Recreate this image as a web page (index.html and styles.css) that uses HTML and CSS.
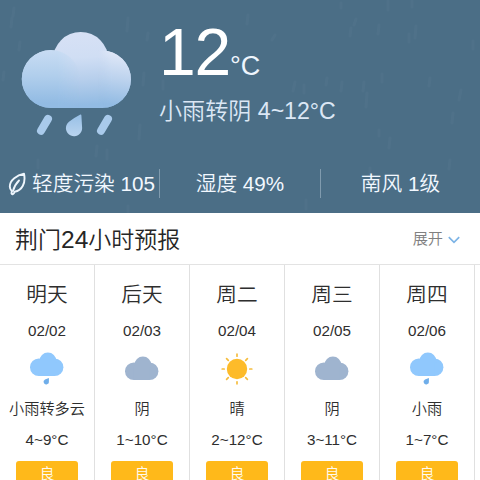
FILE: index.html
```html
<!DOCTYPE html>
<html lang="zh-CN">
<head>
<meta charset="utf-8">
<title>天气预报</title>
<link rel="stylesheet" href="styles.css">
</head>
<body>
<svg class="defs" width="0" height="0" aria-hidden="true">
  <symbol id="puffs" viewBox="0 0 36 36">
    <circle cx="9.800" cy="16.200" r="8.800"/>
    <circle cx="25.600" cy="16.200" r="8.800"/>
    <circle cx="18.900" cy="10" r="8.400"/>
    <path d="M9.800 12H25.600V25H9.800Z"/>
  </symbol>
  <symbol id="rain" viewBox="0 0 36 36">
    <use href="#puffs" fill="#90c8fd"/>
    <path fill="#6faeea" d="M19.900 26.900V30.200A2.700 2.700 0 1 1 16 28.400Z"/>
  </symbol>
  <symbol id="cloud" viewBox="0 0 36 36">
    <use href="#puffs" y="4" fill="#9fb4cf"/>
  </symbol>
  <symbol id="sun" viewBox="0 0 36 36">
    <circle cx="18" cy="18" r="10.200" fill="#fdbb2a"/>
    <path stroke="#f5bd3f" stroke-width="1.700" stroke-linecap="round" d="M18 3.200v2M18 30.800v2M3.200 18h2M30.800 18h2M7.600 7.600l1.700 1.700M26.700 26.700l1.700 1.700M28.400 7.600l-1.700 1.700M9.300 26.700l-1.700 1.700"/>
  </symbol>
</svg>

<header class="hero">
  <svg class="streaks" viewBox="0 0 480 213" aria-hidden="true">
    <path d="M14 8l-1 8M12 18l-1 9M128 18l-1 13M148 33l-1 7M144 73l-1 12M140 125l-1 14M97 146l-1 10M107 150v9M20 42l-1 8M4 72l-1 8M341 3v5M388 1v9M412 1v6M356 19l-2 6M351 28l-1 8M379 25l-1 9M416 26l-1 12M409 34v8M473 41v8M327 78l-1 7M342 82l-1 9M364 82l-1 9M382 74v8M430 78l-1 8M461 90l-2 10M453 113l-1 10M367 93l-1 14M379 130v6M390 138l-1 10M248 15l-1 9M275 35l-3 5M295 82l-2 9M304 85v8M163 81v8M38 160v8M128 206v6M370 168v7M306 200v9M450 160l-1 9"/>
  </svg>
  <div class="now">
    <svg class="now-icon" viewBox="20 30 112 108" aria-hidden="true">
      <defs>
        <linearGradient id="back" gradientUnits="userSpaceOnUse" x1="78" y1="32" x2="82" y2="105"><stop offset="0" stop-color="#d7e1f5"/><stop offset=".35" stop-color="#d0def4"/><stop offset=".65" stop-color="#b7cfec"/><stop offset="1" stop-color="#92bbe3"/></linearGradient>
        <linearGradient id="left" gradientUnits="userSpaceOnUse" x1="50" y1="50" x2="50" y2="103"><stop offset="0" stop-color="#c8dcf3"/><stop offset=".5" stop-color="#b0ceec"/><stop offset="1" stop-color="#92bbe3"/></linearGradient>
        <linearGradient id="right" gradientUnits="userSpaceOnUse" x1="110" y1="50" x2="102" y2="103"><stop offset="0" stop-color="#e2e9f8"/><stop offset=".5" stop-color="#bdd3ee"/><stop offset="1" stop-color="#92bbe3"/></linearGradient>
        <linearGradient id="fadeOut" gradientUnits="userSpaceOnUse" x1="58" y1="0" x2="80" y2="0"><stop offset="0" stop-color="#fff"/><stop offset="1" stop-color="#000"/></linearGradient>
        <linearGradient id="fadeIn" gradientUnits="userSpaceOnUse" x1="98" y1="0" x2="112" y2="0"><stop offset="0" stop-color="#000"/><stop offset="1" stop-color="#fff"/></linearGradient>
        <linearGradient id="drop" x1="0" y1="0" x2="0" y2="1"><stop offset="0" stop-color="#98c0e6"/><stop offset="1" stop-color="#b9d4ef"/></linearGradient>
        <mask id="maskLeft" maskUnits="userSpaceOnUse" x="20" y="30" width="112" height="108"><rect x="20" y="30" width="112" height="108" fill="url(#fadeOut)"/></mask>
        <mask id="maskRight" maskUnits="userSpaceOnUse" x="20" y="30" width="112" height="108"><rect x="20" y="30" width="112" height="108" fill="url(#fadeIn)"/></mask>
      </defs>
      <g fill="url(#back)"><circle cx="80.700" cy="59.800" r="27.800"/><circle cx="102.200" cy="79.200" r="28.700"/><circle cx="50.700" cy="79" r="28.800"/><path d="M51 70H102V108H51Z"/></g>
      <path fill="url(#right)" mask="url(#maskRight)" d="M102.200 50.500A28.700 28.700 0 0 1 102.200 108H90V50.500Z"/>
      <path fill="url(#left)" mask="url(#maskLeft)" d="M50.700 50A29 29 0 0 0 50.700 108H79.700V79A29 29 0 0 0 50.700 50Z"/>
      <path stroke="#a9caeb" stroke-width="8" stroke-linecap="round" d="M48 118.900L41 130.800M108 118.900L101 130.800"/>
      <path fill="url(#drop)" d="M80.400 114.600Q81.300 114.200 81.400 115.500L82.100 127.500A8.100 8.100 0 1 1 69 121.800Q73 118.500 80.400 114.600Z"/>
    </svg>
    <div class="now-text">
      <div class="temp"><span class="deg">12</span><span class="unit">°C</span></div>
      <div class="summary">小雨转阴 4~12°C</div>
    </div>
  </div>
  <div class="stats">
    <div class="stat air"><svg class="leaf" viewBox="0 0 18 24" aria-hidden="true"><path d="M16 1.800C9 3 1.800 8 1.800 14.500C1.800 16.800 2.800 18 3.800 19L3.500 21.500C4 22.800 5.600 22.300 6.700 19.800C14 18.500 18 11 16 1.800Z"/><path d="M5 19C6.200 14.500 8 11.500 11 8.500"/></svg>轻度污染 105</div>
    <div class="stat">湿度 49%</div>
    <div class="stat">南风 1级</div>
  </div>
</header>

<section class="forecast">
  <div class="bar">
    <h2>荆门<span>24</span>小时预报</h2>
    <div class="more">展开<svg viewBox="0 0 14 8" aria-hidden="true"><path d="M1.800 1.200L7 6.400L12.200 1.200"/></svg></div>
  </div>
  <div class="days">
    <div class="day"><b>明天</b><span class="date">02/02</span><svg><use href="#rain"/></svg><span class="sky">小雨转多云</span><span class="range">4~9°C</span><span class="aqi">良</span></div>
    <div class="day"><b>后天</b><span class="date">02/03</span><svg><use href="#cloud"/></svg><span class="sky">阴</span><span class="range">1~10°C</span><span class="aqi">良</span></div>
    <div class="day"><b>周二</b><span class="date">02/04</span><svg><use href="#sun"/></svg><span class="sky">晴</span><span class="range">2~12°C</span><span class="aqi">良</span></div>
    <div class="day"><b>周三</b><span class="date">02/05</span><svg><use href="#cloud"/></svg><span class="sky">阴</span><span class="range">3~11°C</span><span class="aqi">良</span></div>
    <div class="day"><b>周四</b><span class="date">02/06</span><svg><use href="#rain"/></svg><span class="sky">小雨</span><span class="range">1~7°C</span><span class="aqi">良</span></div>
  </div>
</section>
</body>
</html>
```
FILE: styles.css
```css
* { box-sizing: border-box; }
body {
  margin: 0;
  width: 480px;
  height: 480px;
  overflow: hidden;
  background: #fff;
  color: #2e2e2e;
  font-family: "Liberation Sans", "Noto Sans CJK SC", sans-serif;
  font-weight: 350;
}
.defs { display: block; }
.hero {
  position: relative;
  height: 213px;
  background: #4b6e86;
  color: #fff;
}
.streaks {
  position: absolute;
  inset: 0;
  width: 480px;
  height: 213px;
  stroke: #6b8ba1;
  stroke-width: 3;
  stroke-linecap: round;
  opacity: .13;
}
.now {
  position: relative;
  display: flex;
  height: 160px;
}
.now-icon {
  width: 112px;
  height: 108px;
  margin: 30px 0 0 20px;
  fill: none;
}
.now-text { margin: 19px 0 0 27px; }
.temp {
  height: 70px;
  font-size: 66px;
  line-height: 66px;
  white-space: nowrap;
}
.deg { letter-spacing: -1.200px; }
.unit { font-size: 27px; color: #eef5fd; }
.summary {
  height: 44px;
  font-size: 23.100px;
  line-height: 44px;
  color: #dbe7f5;
  white-space: nowrap;
}
.stats {
  position: relative;
  display: grid;
  grid-template-columns: 159px 161px 160px;
  padding-top: 9px;
}
.stat {
  height: 29px;
  display: flex;
  align-items: center;
  justify-content: center;
  font-size: 20.700px;
  line-height: 29px;
  color: #f2f8ff;
  white-space: nowrap;
}
.stat + .stat { border-left: 1px solid #809bae; }
.air { justify-content: flex-start; padding-left: 8px; }
.leaf {
  width: 18px;
  height: 24px;
  margin-right: 6px;
  fill: none;
  stroke: #eef6fd;
  stroke-width: 1.900;
  stroke-linejoin: round;
  stroke-linecap: round;
}
.bar {
  height: 51px;
  display: flex;
  align-items: center;
  justify-content: space-between;
  padding: 0 19px 0 15px;
}
h2 {
  margin: 2px 0 0;
  font-size: 23px;
  line-height: 30px;
  font-weight: 350;
  color: #262626;
}
h2 span { font-size: 24.500px; }
.more {
  display: flex;
  align-items: center;
  font-size: 15.200px;
  line-height: 22px;
  color: #808080;
}
.more svg {
  width: 14px;
  height: 8px;
  margin: 2px 0 0 4px;
  fill: none;
  stroke: #7db4e6;
  stroke-width: 1.700;
}
.days {
  display: grid;
  grid-template-columns: repeat(5, 95px);
  height: 216px;
  border-top: 1px solid #e3e3e3;
}
.day {
  display: flex;
  flex-direction: column;
  align-items: center;
  padding-top: 12px;
  border-right: 1px solid #e0e0e0;
  white-space: nowrap;
}
.day b {
  font-size: 20.700px;
  font-weight: 350;
  line-height: 36px;
}
.date {
  margin-top: 8px;
  font-size: 15.200px;
  line-height: 20px;
}
.day svg { width: 36px; height: 36px; margin-top: 10px; }
.sky {
  margin-top: 10px;
  font-size: 15.200px;
  line-height: 24px;
}
.range {
  margin-top: 9px;
  font-size: 15.200px;
  line-height: 20px;
}
.aqi {
  width: 62px;
  height: 30px;
  margin-top: 11px;
  border-radius: 3px;
  background: #ffb91a;
  color: #fffaf0;
  font-size: 15.200px;
  line-height: 26px;
  text-align: center;
}
```
